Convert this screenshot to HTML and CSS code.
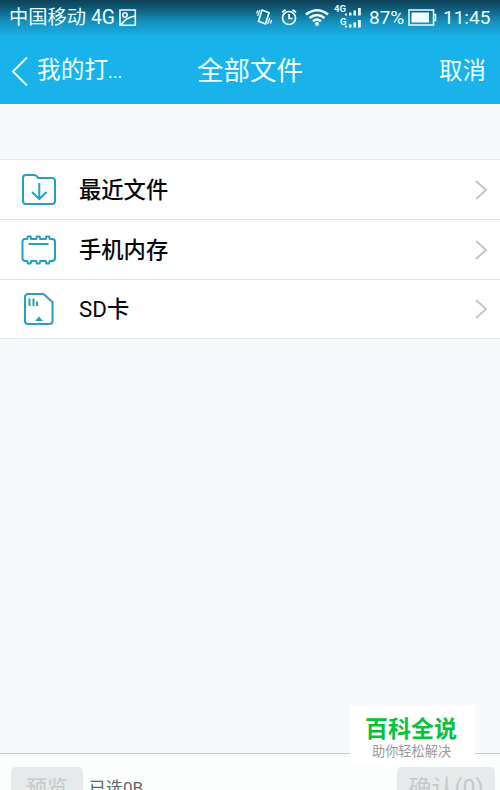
FILE: index.html
```html
<!DOCTYPE html>
<html lang="zh-CN">
<head>
<meta charset="utf-8">
<title>全部文件</title>
<link rel="stylesheet" href="styles.css">
</head>
<body>
<div class="screen">
  <header class="top">
    <div class="status">
      <span class="carrier">中国移动 4G</span>
      <svg class="shot" width="18" height="18" viewBox="0 0 18 18"><path d="M1 1H16.300V16.300H1ZM2 16Q6 9 16 7"/><circle cx="6" cy="6" r="2.200"/></svg>
      <svg class="indicators" width="124" height="30" viewBox="0 0 124 30">
        <g class="line">
          <path d="M6 10L13 12.700L9.500 24L2.500 21.300Z"/>
          <path class="shake" d="M3.800 10L1.700 16M1.700 10.500L.7 13.500M13.800 18L11.700 24M15.500 20L14.500 23.500"/>
          <circle cx="33" cy="18" r="6.500"/>
          <path d="M33 14V18.500H36.500M26 12.300L29.500 9.700M36.500 9.700L40 12.300"/>
        </g>
        <g class="wifi"><path d="M50 14.500Q61 6 72 14.500M53.500 18Q61 12 68.500 18M57 21.300Q61 18 65 21.300"/></g>
        <circle class="fill" cx="61" cy="24" r="2"/>
        <path class="fill" d="M89 13.500h2v2h-2zM93 12.500h2.500v3H93zM97.500 10.500h2.500v5h-2.500zM102 8h2.800v7.500H102zM89 25.500h2v2h-2zM93 24.500h2.500v3H93zM97.500 22.500h2.500v5h-2.500zM102 20h2.800v7.500H102z"/>
        <text x="78" y="12">4G</text><text x="84" y="25">G</text>
      </svg>
      <span class="percent">87%</span>
      <svg class="battery" width="29" height="18" viewBox="0 0 29 18"><path class="case" d="M1 1H25.500V16H1ZM26 5.500H27.500V11.500H26"/><path class="fill" d="M3.500 3.500H21V13.500H3.500z"/></svg>
      <span class="clock">11:45</span>
    </div>
    <nav class="nav">
      <a class="back"><svg width="18" height="31" viewBox="0 0 18 31"><path d="M16 1.500L2 15.500L16 29.500"/></svg><span>我的打<span class="dots">...</span></span></a>
      <h1 class="title">全部文件</h1>
      <a class="cancel">取消</a>
    </nav>
  </header>
  <main class="content">
    <ul class="list">
      <li class="row">
        <svg class="icon" width="36" height="36" viewBox="0 0 36 36"><path d="M2 6Q2 3 5 3H13Q15.500 3 17 6H31Q34 6 34 9V29Q34 32 31 32H5Q2 32 2 29ZM18.300 11V27M11 20L18.300 27L25.500 20"/></svg>
        <span class="label">最近文件</span>
        <svg class="arrow" width="14" height="22" viewBox="0 0 14 22"><path d="M2 2L12 11L2 20"/></svg>
      </li>
      <li class="row">
        <svg class="icon" width="36" height="36" viewBox="0 0 36 36"><path d="M4 7H6.300L6.800 4.500H9.700L10.200 7H15.300L15.800 4.500H18.700L19.200 7H24.800L25.300 4.500H28.200L28.700 7H31Q34 7 34 10V26Q34 29 31 29H28.700L28.200 31.500H25.300L24.800 29H19.200L18.700 31.500H15.800L15.300 29H10.200L9.700 31.500H6.800L6.300 29H4.500Q1.500 29 1.500 26V10Q1.500 7 4 7ZM7.500 12H27.500"/></svg>
        <span class="label">手机内存</span>
        <svg class="arrow" width="14" height="22" viewBox="0 0 14 22"><path d="M2 2L12 11L2 20"/></svg>
      </li>
      <li class="row">
        <svg class="icon" width="36" height="36" viewBox="0 0 36 36"><path d="M7 3H22.500L31.500 11V30Q31.500 33 28.500 33H7Q4 33 4 30V6Q4 3 7 3ZM8.500 7.500V15M12.500 7.500V15M16 10.500V15"/><path class="notch" d="M14 30L18 25.500L22 30z"/></svg>
        <span class="label"><span class="latin">SD</span>卡</span>
        <svg class="arrow" width="14" height="22" viewBox="0 0 14 22"><path d="M2 2L12 11L2 20"/></svg>
      </li>
    </ul>
  </main>
  <footer class="bar">
    <span class="button preview">预览</span>
    <span class="chosen">已选0B</span>
    <span class="button confirm">确认(0)</span>
  </footer>
  <aside class="mark"><strong>百科全说</strong><span>助你轻松解决</span></aside>
</div>
</body>
</html>
```
FILE: styles.css
```css
* { box-sizing: border-box; }
body { margin: 0; font-family: Roboto, "Noto Sans CJK SC", sans-serif; }
svg { display: block; flex: none; fill: none; }
.screen { position: relative; width: 500px; height: 790px; overflow: hidden; display: flex; flex-direction: column; background: #f7f9fb; }
.top { height: 104px; flex: none; color: #edffff; background: linear-gradient(#0c4056 0, #106080 10px, #1590bd 22px, #19b0e8 36px, #19b2ea 42px); }
.status { height: 36px; display: flex; align-items: center; padding: 0 9px; font-size: 19px; line-height: 36px; white-space: nowrap; }
.carrier { width: 110px; font-size: 19.300px; line-height: 34px; padding-bottom: 1px; }
.shot { stroke: #edffff; stroke-width: 1.600; }
.indicators { margin: 0 0 6px 119px; }
.line { stroke: #edffff; stroke-width: 1.700; }
.shake { stroke-width: 1.200; }
.wifi { stroke: #edffff; stroke-width: 2.600; }
.fill { fill: #edffff; }
.indicators text { font: bold 9.500px Roboto, sans-serif; fill: #edffff; }
.percent { width: 39px; margin-left: -11px; }
.battery { stroke-width: 1.500; }
.case { stroke: #edffff; }
.clock { margin-left: 6px; }
.nav { height: 68px; display: grid; grid-template-columns: 150px 200px 150px; align-items: center; line-height: 68px; white-space: nowrap; }
.back { display: flex; align-items: center; gap: 8px; padding-left: 11px; font-size: 23.700px; }
.back svg { stroke: #edffff; stroke-width: 2; }
.dots { font-size: 18px; }
.title { margin: 0; text-align: center; font-size: 26.500px; font-weight: 400; }
.cancel { text-align: right; padding-right: 14px; font-size: 23.500px; }
.content { flex: 1; padding-top: 55px; }
.list { margin: 0; padding: 0; list-style: none; border-top: 1px solid #e6e8eb; background: #fff; }
.row { height: 60px; display: flex; align-items: center; padding: 0 12px 0 21px; border-bottom: 1px solid #e2e5e8; }
.row:last-child { height: 59px; }
.icon { stroke: #24a1c0; stroke-width: 2; stroke-linejoin: round; }
.notch { fill: #24a1c0; stroke: none; }
.label { flex: 1; margin-left: 22px; font-size: 22.300px; line-height: 58px; font-weight: 500; color: #080808; }
.latin { font-weight: 400; }
.arrow { stroke: #c7c7c7; stroke-width: 2; }
.bar { height: 37px; flex: none; display: flex; align-items: flex-start; padding: 13px 5px 0 11px; border-top: 1px solid #c8cacc; background: #fcfdfd; white-space: nowrap; }
.button { height: 44px; border-radius: 5px; background: #e7eaea; color: #c5c9c9; text-align: center; font-size: 21px; line-height: 42px; }
.preview { width: 72px; }
.chosen { margin-left: 6px; font-size: 17px; line-height: 42px; color: #666; }
.confirm { width: 98px; margin-left: auto; font-size: 23px; line-height: 44px; }
.mark { position: absolute; left: 350px; top: 705px; width: 125px; height: 60px; display: flex; flex-direction: column; padding: 11px 0 0 15px; background: #fff; color: #999; font-size: 13.200px; line-height: 17px; white-space: nowrap; }
.mark strong { font-size: 23px; line-height: 27px; font-weight: 700; color: #07c23c; }
.mark span { padding-left: 7px; }
```
